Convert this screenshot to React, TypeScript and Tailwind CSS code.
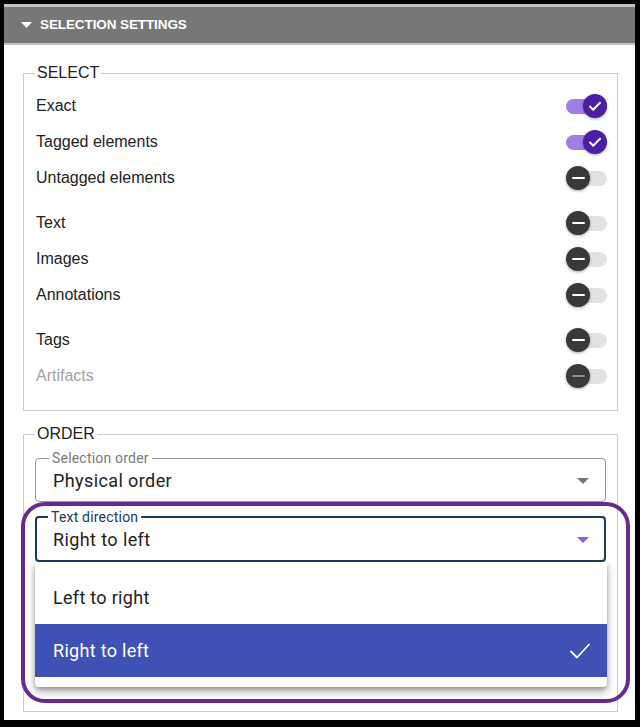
import React from "react"

type Row = { label: string; on?: boolean; disabled?: boolean; gapBefore?: boolean }

const rows: Row[] = [
  { label: "Exact", on: true },
  { label: "Tagged elements", on: true },
  { label: "Untagged elements" },
  { label: "Text", gapBefore: true },
  { label: "Images" },
  { label: "Annotations" },
  { label: "Tags", gapBefore: true },
  { label: "Artifacts", disabled: true },
]

const Toggle = ({ on, disabled }: { on?: boolean; disabled?: boolean }) => {
  return (
    <div className="relative w-[41px] h-[24px] flex items-center">
      <div
        className={`w-[41px] h-[15px] rounded-full ${on ? "bg-[#9f7ee6]" : "bg-[#e2e2e2]"}`}
      />
      <div
        className={`absolute top-0 ${on ? "left-[17px] bg-[#4b1fa3]" : "left-0 bg-[#393939]"} w-[24px] h-[24px] rounded-full flex items-center justify-center shadow-[0_1px_3px_rgba(0,0,0,0.35)]`}
      >
        {on ? (
          <svg width="16" height="16" viewBox="0 0 16 16" fill="none">
            <path d="M3 8.5l3.2 3.2L13 4.8" stroke="white" strokeWidth="2" strokeLinecap="round" strokeLinejoin="round" />
          </svg>
        ) : (
          <div className={`w-[13px] h-[2px] rounded ${disabled ? "bg-[#8a8a8a]" : "bg-white"}`} />
        )}
      </div>
    </div>
  )
}

const Caret = ({ color }: { color: string }) => (
  <svg width="12" height="6" viewBox="0 0 12 6">
    <path d="M0 0h12L6 6z" fill={color} />
  </svg>
)

export default function App() {
  return (
    <div className="h-[727px] bg-black pt-[4px] pl-[4px] pr-[5px] pb-[7px]">
      <div className="h-full bg-white flex flex-col" style={{ fontFamily: '"Liberation Sans", Arial, sans-serif' }}>
        {/* Header */}
        <div className="border-t-[3px] border-b-2 border-[#c2c2c2] bg-[#777777] h-[41px] flex items-center pl-[17px] gap-[8px]">
          <svg width="11" height="6" viewBox="0 0 11 6">
            <path d="M0 0h11L5.5 6z" fill="white" />
          </svg>
          <span className="text-white font-bold text-[13.5px] tracking-[-0.1px]">SELECTION SETTINGS</span>
        </div>

        {/* SELECT */}
        <fieldset className="mt-[19px] ml-[19px] mr-[17px] border border-[#cccccc] pl-[12px] pr-[10px] pb-[16px] pt-[6px]">
          <legend className="-ml-[1px] px-[2px] text-[16px] leading-[18px] text-[#222]">SELECT</legend>
          {rows.map((r) => (
            <div
              key={r.label}
              className={`h-[36px] flex items-center justify-between ${r.gapBefore ? "mt-[9px]" : ""}`}
            >
              <span className={`text-[16px] ${r.disabled ? "text-[#a3a3a3]" : "text-[#222]"}`}>{r.label}</span>
              <Toggle on={r.on} disabled={r.disabled} />
            </div>
          ))}
        </fieldset>

        {/* ORDER */}
        <fieldset className="mt-[14px] ml-[19px] mr-[17px] mb-[8px] flex-1 border border-[#cccccc] pl-[11px] pr-[11px] pt-[9px]">
          <legend className="ml-[0px] px-[2px] text-[16px] leading-[18px] text-[#222]">ORDER</legend>

          <div style={{ fontFamily: "Roboto, sans-serif" }}>
            <fieldset className="relative h-[50px] border border-[#9a9a9a] rounded-[4px] px-[17px] flex items-center justify-between">
              <legend className="ml-[-4px] px-[3px] text-[14px] tracking-[0.2px] leading-[12px] text-[#7a7a7a]">Selection order</legend>
              <span className="text-[18px] tracking-[0.4px] text-[#222] -mt-[4px]">Physical order</span>
              <span className="-mt-[4px] mr-[-1px]"><Caret color="#777" /></span>
            </fieldset>

            <div className="relative mt-[9px]">
              {/* highlight ring */}
              <div className="absolute -left-[14px] -right-[24px] -top-[9px] -bottom-[141px] border-[4px] border-[#672a8f] rounded-[24px] pointer-events-none" />

              <fieldset className="relative h-[51px] border-2 border-[#1b3a5c] rounded-[4px] pl-[16px] pr-[15px] flex items-center justify-between">
                <legend className="ml-[-5px] px-[3px] text-[14px] tracking-[0.2px] leading-[12px] text-[#1b3a5c]">Text direction</legend>
                <span className="text-[18px] tracking-[0.4px] text-[#222] -mt-[4px]">Right to left</span>
                <span className="-mt-[4px]"><Caret color="#8b5cf6" /></span>
              </fieldset>

              {/* dropdown menu */}
              <div className="absolute left-0 -right-[1px] top-full bg-white rounded-b-[4px] shadow-[0_5px_8px_rgba(0,0,0,0.3),0_2px_4px_rgba(0,0,0,0.2)] pt-[8px] pb-[10px]">
                <div className="h-[54px] flex items-center px-[18px] text-[18px] tracking-[0.3px] text-[#222]">Left to right</div>
                <div className="h-[53px] flex items-center justify-between pl-[18px] pr-[16px] bg-[#3f51b5] text-[18px] tracking-[0.3px] text-white">
                  <span>Right to left</span>
                  <svg width="22" height="18" viewBox="0 0 22 18" fill="none">
                    <path d="M2 9.5l6 6L20 2.5" stroke="white" strokeWidth="1.8" strokeLinecap="round" strokeLinejoin="round" />
                  </svg>
                </div>
              </div>
            </div>
          </div>
        </fieldset>
      </div>
    </div>
  )
}
